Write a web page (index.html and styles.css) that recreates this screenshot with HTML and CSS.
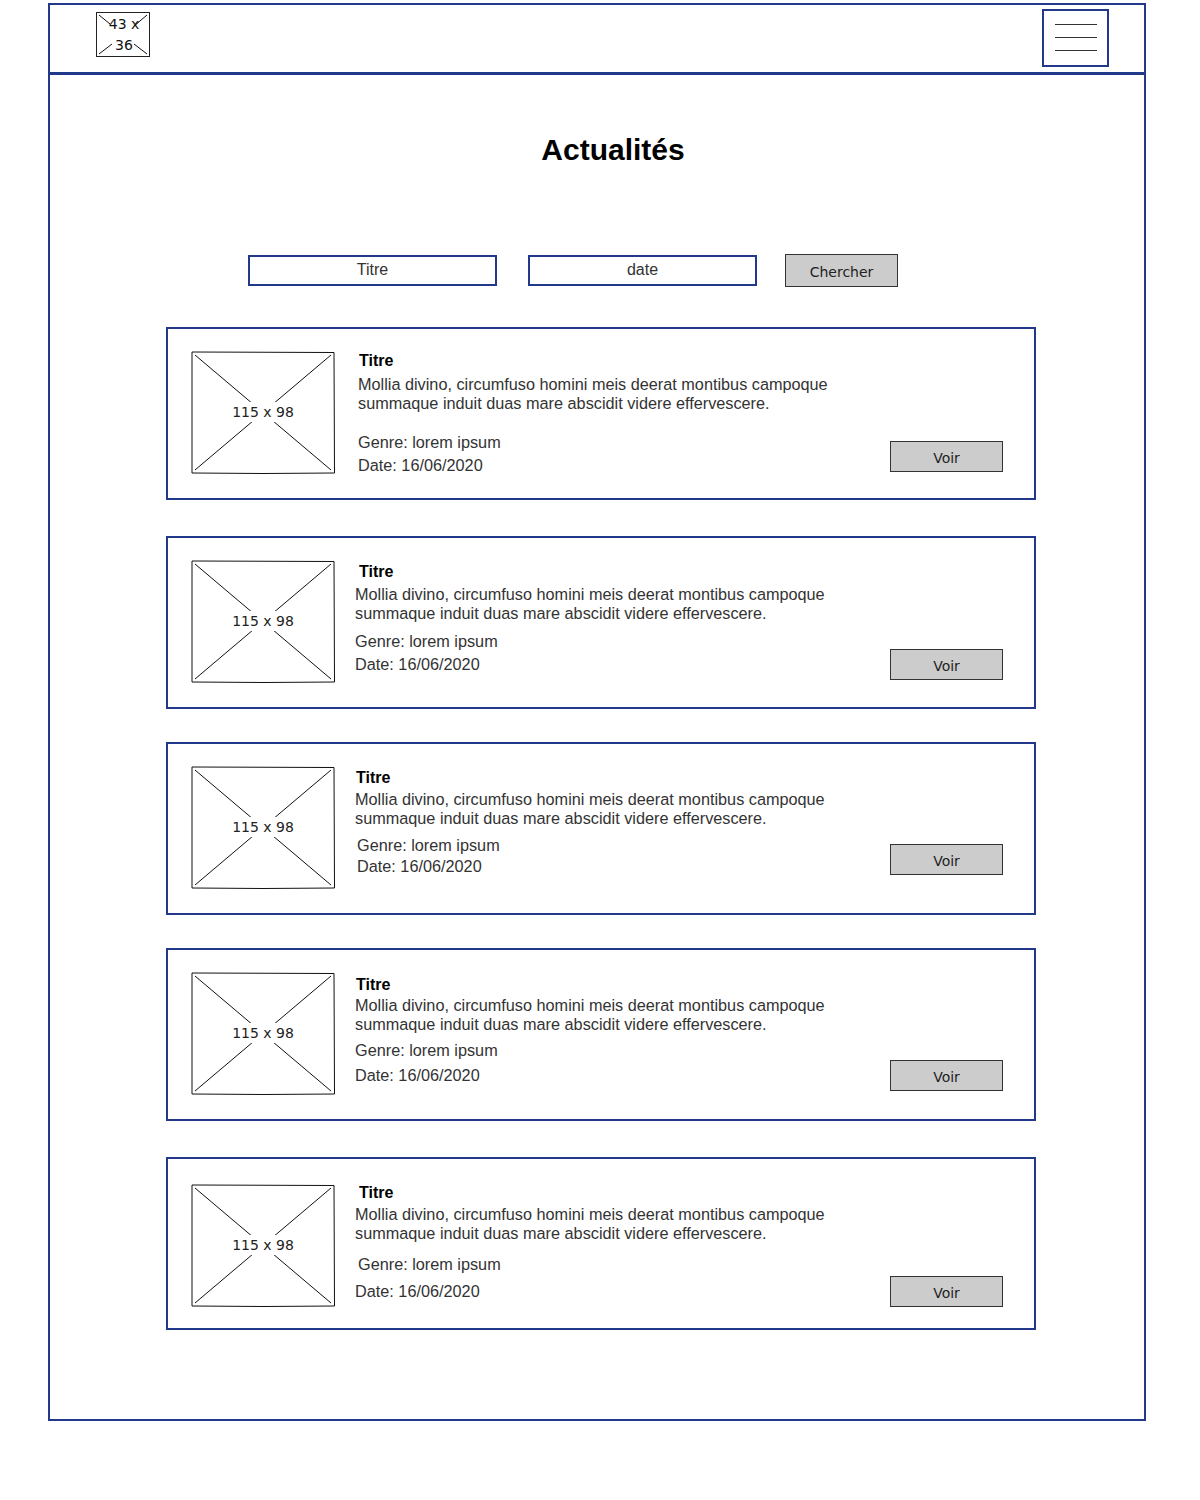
FILE: index.html
```html
<!DOCTYPE html>
<html lang="fr">
<head>
	<meta charset="UTF-8">
	<title>Actualités</title>
	<link rel="stylesheet" href="styles.css">
</head>
<body>
	<div class="frame">
		<header class="topBar">
			<div class="logo">
				<svg class="logoX" width="54" height="45" viewBox="0 0 54 45">
					<line x1="3" y1="3" x2="14" y2="12" />
					<line x1="51" y1="3" x2="38" y2="14" />
					<line x1="3" y1="42" x2="16" y2="32" />
					<line x1="51" y1="42" x2="38" y2="32" />
				</svg>
				<span class="logoText">43 x<br>36</span>
			</div>
			<button class="burger" type="button">
				<span></span><span></span><span></span>
			</button>
		</header>

		<main class="content">
			<h1 class="pageTitle">Actualités</h1>

			<form class="search" onsubmit="return false;">
				<div class="field fieldTitre">Titre</div>
				<div class="field fieldDate">date</div>
				<button class="sketchBtn searchBtn" type="button">Chercher</button>
			</form>

			<div class="newsList">
				<div class="card card1">
					<div class="thumb">
						<svg width="144" height="123" viewBox="0 0 144 123">
							<path class="frameLine" d="M1 1 L143 1.5 L143.5 122 L72 122.5 L1 122 Z" />
							<line x1="4" y1="4" x2="140" y2="119" />
							<line x1="140" y1="4" x2="4" y2="119" />
							<rect class="mask" x="40" y="51" width="64" height="20" />
							<text x="72" y="66">115 x 98</text>
						</svg>
					</div>
					<div class="cardBody">
						<div class="cardTitle">Titre</div>
						<p class="cardText">Mollia divino, circumfuso homini meis deerat montibus campoque summaque induit duas mare abscidit videre effervescere.</p>
						<div class="meta genre">Genre: lorem ipsum</div>
						<div class="meta date">Date: 16/06/2020</div>
					</div>
					<button class="sketchBtn voir" type="button">Voir</button>
				</div>

				<div class="card card2">
					<div class="thumb">
						<svg width="144" height="123" viewBox="0 0 144 123">
							<path class="frameLine" d="M1 1 L143 1.5 L143.5 122 L72 122.5 L1 122 Z" />
							<line x1="4" y1="4" x2="140" y2="119" />
							<line x1="140" y1="4" x2="4" y2="119" />
							<rect class="mask" x="40" y="51" width="64" height="20" />
							<text x="72" y="66">115 x 98</text>
						</svg>
					</div>
					<div class="cardBody">
						<div class="cardTitle">Titre</div>
						<p class="cardText">Mollia divino, circumfuso homini meis deerat montibus campoque summaque induit duas mare abscidit videre effervescere.</p>
						<div class="meta genre">Genre: lorem ipsum</div>
						<div class="meta date">Date: 16/06/2020</div>
					</div>
					<button class="sketchBtn voir" type="button">Voir</button>
				</div>

				<div class="card card3">
					<div class="thumb">
						<svg width="144" height="123" viewBox="0 0 144 123">
							<path class="frameLine" d="M1 1 L143 1.5 L143.5 122 L72 122.5 L1 122 Z" />
							<line x1="4" y1="4" x2="140" y2="119" />
							<line x1="140" y1="4" x2="4" y2="119" />
							<rect class="mask" x="40" y="51" width="64" height="20" />
							<text x="72" y="66">115 x 98</text>
						</svg>
					</div>
					<div class="cardBody">
						<div class="cardTitle">Titre</div>
						<p class="cardText">Mollia divino, circumfuso homini meis deerat montibus campoque summaque induit duas mare abscidit videre effervescere.</p>
						<div class="meta genre">Genre: lorem ipsum</div>
						<div class="meta date">Date: 16/06/2020</div>
					</div>
					<button class="sketchBtn voir" type="button">Voir</button>
				</div>

				<div class="card card4">
					<div class="thumb">
						<svg width="144" height="123" viewBox="0 0 144 123">
							<path class="frameLine" d="M1 1 L143 1.5 L143.5 122 L72 122.5 L1 122 Z" />
							<line x1="4" y1="4" x2="140" y2="119" />
							<line x1="140" y1="4" x2="4" y2="119" />
							<rect class="mask" x="40" y="51" width="64" height="20" />
							<text x="72" y="66">115 x 98</text>
						</svg>
					</div>
					<div class="cardBody">
						<div class="cardTitle">Titre</div>
						<p class="cardText">Mollia divino, circumfuso homini meis deerat montibus campoque summaque induit duas mare abscidit videre effervescere.</p>
						<div class="meta genre">Genre: lorem ipsum</div>
						<div class="meta date">Date: 16/06/2020</div>
					</div>
					<button class="sketchBtn voir" type="button">Voir</button>
				</div>

				<div class="card card5">
					<div class="thumb">
						<svg width="144" height="123" viewBox="0 0 144 123">
							<path class="frameLine" d="M1 1 L143 1.5 L143.5 122 L72 122.5 L1 122 Z" />
							<line x1="4" y1="4" x2="140" y2="119" />
							<line x1="140" y1="4" x2="4" y2="119" />
							<rect class="mask" x="40" y="51" width="64" height="20" />
							<text x="72" y="66">115 x 98</text>
						</svg>
					</div>
					<div class="cardBody">
						<div class="cardTitle">Titre</div>
						<p class="cardText">Mollia divino, circumfuso homini meis deerat montibus campoque summaque induit duas mare abscidit videre effervescere.</p>
						<div class="meta genre">Genre: lorem ipsum</div>
						<div class="meta date">Date: 16/06/2020</div>
					</div>
					<button class="sketchBtn voir" type="button">Voir</button>
				</div>
			</div>
		</main>
	</div>
</body>
</html>
```

FILE: styles.css
```css
html,body,p,h1{margin:0px;padding:0px;}
body{
	background-color: #fff;
	font-family: "Liberation Sans", Arial, sans-serif;
	color: #333;
}
.frame{
	width: 1098px;
	height: 1418px;
	margin: 3px 0 0 48px;
	border: 2px solid #22388a;
	box-sizing: border-box;
}

/* barre du haut */
.topBar{
	height: 70px;
	box-sizing: border-box;
	border-bottom: 3px solid #22388a;
	display: flex;
	justify-content: space-between;
	align-items: flex-start;
	padding: 7px 35px 0 46px;
}
.logo{
	position: relative;
	width: 54px;
	height: 45px;
	border: 1px solid #222;
	box-sizing: border-box;
	display: flex;
	align-items: center;
	justify-content: center;
}
.logoX{
	position: absolute;
	left: -1px;
	top: -1px;
}
.logoX line{
	stroke: #111;
	stroke-width: 1;
}
.logoText{
	position: relative;
	font-family: "DejaVu Sans", sans-serif;
	font-size: 14px;
	line-height: 21px;
	text-align: center;
	color: #111;
	padding-left: 2px;
}
.burger{
	width: 67px;
	height: 58px;
	margin-top: -3px;
	border: 2px solid #22388a;
	background: #fff;
	padding: 13px 0 0 0;
	box-sizing: border-box;
	display: flex;
	flex-direction: column;
	align-items: center;
	gap: 12px;
}
.burger span{
	display: block;
	width: 42px;
	height: 1px;
	background-color: #333;
}

/* contenu */
.content{
	padding: 0 0 0 116px;
}
.pageTitle{
	margin-top: 57px;
	width: 870px;
	padding-left: 24px;
	box-sizing: border-box;
	text-align: center;
	font-size: 30px;
	line-height: 36px;
	font-weight: bold;
	color: #000;
}
.search{
	margin-top: 86px;
	padding-left: 82px;
	display: flex;
	align-items: center;
	height: 33px;
}
.field{
	height: 31px;
	border: 2px solid #22388a;
	box-sizing: border-box;
	text-align: center;
	font-size: 16px;
	line-height: 26px;
	color: #333;
}
.fieldTitre{
	width: 249px;
}
.fieldDate{
	width: 229px;
	margin-left: 31px;
}
.sketchBtn{
	background-color: #cccccc;
	border: 1px solid #333;
	color: #222;
	font-family: "DejaVu Sans", sans-serif;
	padding: 0;
	box-sizing: border-box;
}
.searchBtn{
	width: 113px;
	height: 33px;
	margin-left: 28px;
	font-size: 14px;
	padding-top: 3px;
}

/* liste des actualités */
.newsList{
	margin-top: 40px;
	width: 870px;
}
.card{
	height: 173px;
	border: 2px solid #22388a;
	box-sizing: border-box;
	display: flex;
	align-items: flex-start;
	padding: 22px 31px 0 23px;
}
.card + .card{
	margin-top: 33px;
}
.card2, .card5{
	margin-top: 36px !important;
}
.thumb{
	width: 144px;
	height: 123px;
	flex: none;
}
.thumb svg line, .thumb .frameLine{
	stroke: #111;
	stroke-width: 1;
	fill: none;
}
.thumb .mask{
	fill: #fff;
}
.thumb text{
	font-family: "DejaVu Sans", sans-serif;
	font-size: 14px;
	text-anchor: middle;
	fill: #222;
}
.cardBody{
	flex: 1;
	padding-left: 23px;
	font-size: 16.25px;
	line-height: 19px;
}
.cardTitle{
	font-weight: bold;
	font-size: 16px;
	color: #000;
}
.cardText{
	margin-top: 5px;
	width: 490px;
	color: #333;
}
.meta{
	color: #333;
	line-height: 19px;
}
.voir{
	align-self: flex-end;
	width: 113px;
	height: 31px;
	margin-bottom: 26px;
	font-size: 14px;
	padding-top: 3px;
}

/* petites différences entre les cartes */
.card1 .genre{ margin-top: 20px; }
.card1 .date{ margin-top: 4px; }
.card1 .cardTitle{ padding-left: 1px; }
.card2 .cardBody{ padding-left: 20px; }
.card2 .cardTitle{ margin-top: 2px; padding-left: 4px; }
.card2 .cardText{ margin-top: 4px; }
.card2 .genre{ margin-top: 9px; }
.card2 .date{ margin-top: 4px; }
.card2 .voir{ margin-bottom: 27px; }
.card3 .cardBody{ padding-left: 20px; }
.card3 .cardTitle{ margin-top: 2px; padding-left: 1px; }
.card3 .cardText{ margin-top: 3px; }
.card3 .genre{ margin-top: 8px; padding-left: 2px; }
.card3 .date{ margin-top: 2px; padding-left: 2px; }
.card3 .voir{ margin-bottom: 38px; }
.card4 .cardBody{ padding-left: 20px; }
.card4 .cardTitle{ margin-top: 3px; padding-left: 1px; }
.card4 .cardText{ margin-top: 2px; }
.card4 .genre{ margin-top: 7px; }
.card4 .date{ margin-top: 6px; }
.card4 .voir{ margin-bottom: 28px; }
.card5 .cardBody{ padding-left: 20px; }
.card5 .cardTitle{ margin-top: 2px; padding-left: 4px; }
.card5 .cardText{ margin-top: 3px; }
.card5 .genre{ margin-top: 12px; padding-left: 3px; }
.card5 .date{ margin-top: 8px; }
.card5 .voir{ margin-bottom: 21px; }
.card5 .thumb{ margin-top: 3px; }
```
